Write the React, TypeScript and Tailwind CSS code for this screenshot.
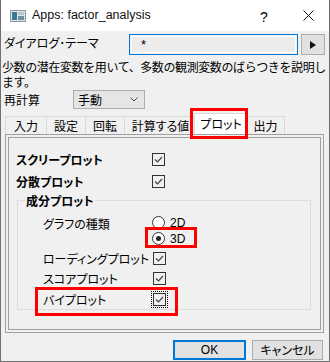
import React from "react";

const jp = "font-['Noto_Sans_CJK_JP','Noto_Sans',sans-serif]";
const palt = "[font-feature-settings:'palt']";

function Check({ focus = false }: { focus?: boolean }) {
  return (
    <div className={`w-[13px] h-[13px] border border-[#333] bg-[#f0f0f0] flex items-center justify-center ${focus ? "outline outline-1 outline-dotted outline-offset-1 outline-black" : ""}`}>
      <svg width="11" height="11" viewBox="0 0 11 11">
        <path d="M2 5.5 L4.5 8 L9 3" fill="none" stroke="#444" strokeWidth="1.2" />
      </svg>
    </div>
  );
}

function Radio({ on }: { on: boolean }) {
  return (
    <div className="w-[13px] h-[13px] rounded-full border border-[#333] bg-white flex items-center justify-center">
      {on && <div className="w-[5px] h-[5px] rounded-full bg-[#222]" />}
    </div>
  );
}

export default function App() {
  const tabs = [
    { label: "入力", w: "w-[41px]" },
    { label: "設定", w: "w-[39px]" },
    { label: "回転", w: "w-[39px]" },
    { label: "計算する値", w: "w-[72px]" },
  ];

  return (
    <div className={`w-[330px] h-[362px] bg-[#f0f0f0] text-[12px] text-black ${jp} border-x border-b border-[#707070] overflow-hidden relative`}>
      {/* title bar */}
      <div className="h-[31px] bg-white flex items-center relative">
        <svg className="ml-[9px]" width="16" height="12" viewBox="0 0 16 12">
          <rect x="0.5" y="0.5" width="15" height="11" fill="#dfe4e8" stroke="#8a96a0" />
          <rect x="2" y="2" width="5" height="8" fill="#3c7a8c" />
          <rect x="8" y="2" width="6" height="3" fill="#b8c4cc" />
          <rect x="8" y="6" width="6" height="4" fill="#6f8fa0" />
        </svg>
        <span className="ml-[6px] font-['Liberation_Sans',sans-serif] text-[12.5px] text-[#111]">Apps: factor_analysis</span>
        <span className="absolute left-[259px] top-[7px] font-['Liberation_Sans',sans-serif] text-[14px]">?</span>
        <svg className="absolute left-[302px] top-[10px]" width="11" height="11" viewBox="0 0 11 11">
          <path d="M0.5 0.5 L10.5 10.5 M10.5 0.5 L0.5 10.5" stroke="#111" strokeWidth="1" />
        </svg>
      </div>

      {/* theme row */}
      <div className="flex items-start h-[21px] mt-[3px]">
        <span className={`ml-[3px] w-[125px] leading-[15px] mt-[1px] ${palt}`}>ダイアログ･テーマ</span>
        <div className="w-[169px] h-[21px] border border-[#0078d7] p-[1px]">
          <div className="w-full h-full bg-[#ececec] border border-white flex items-center pl-[9px] font-['Liberation_Sans',sans-serif] text-[13px] leading-none">
            *
          </div>
        </div>
        <div className="ml-[3px] w-[24px] h-[21px] bg-[#e1e1e1] border border-[#adadad] flex items-center justify-center">
          <svg width="6" height="8" viewBox="0 0 6 8">
            <path d="M0 0 L6 4 L0 8 Z" fill="#111" />
          </svg>
        </div>
      </div>

      {/* description */}
      <div className="mt-[4px] ml-[1px] leading-[15px] tracking-[-0.4px] whitespace-nowrap">
        <p>少数の潜在変数を用いて、多数の観測変数のばらつきを説明し</p>
        <p>ます。</p>
      </div>

      {/* recalc row */}
      <div className="flex items-center mt-[1px] h-[19px]">
        <span className="ml-[3px] w-[69px]">再計算</span>
        <div className="w-[72px] h-[19px] bg-[#e5e5e5] border border-[#adadad] flex items-center justify-between pl-[4px] pr-[6px]">
          <span className="leading-none">手動</span>
          <svg width="8" height="5" viewBox="0 0 8 5">
            <path d="M0.5 0.5 L4 4 L7.5 0.5" fill="none" stroke="#444" strokeWidth="1" />
          </svg>
        </div>
      </div>

      {/* tabs */}
      <div className="flex items-end h-[21px] mt-[4px] ml-[4px]">
        {tabs.map((t) => (
          <div key={t.label} className={`${t.w} h-[18px] border-t border-l border-[#d9d9d9] bg-[#f0f0f0] flex items-center justify-center leading-none ${palt}`}>
            {t.label}
          </div>
        ))}
        <div className={`relative w-[54px] h-[21px] -ml-[2px] -mr-[2px] bg-white border border-b-0 border-[#d9d9d9] flex items-center justify-center leading-none z-10 ${palt}`}>
          プロット
          <div className="absolute -left-[5px] -right-[1px] -top-[6px] -bottom-[5px] border-[3px] border-[#ff0000]" />
        </div>
        <div className="w-[39px] h-[18px] border-t border-x border-[#d9d9d9] flex items-center justify-center leading-none">
          出力
        </div>
      </div>

      {/* panel */}
      <div className="ml-[4px] mr-[5px] h-[199px] border border-[#a0a0a0] bg-[#f0f0f0] p-[2px]">
        <div className={`h-full border border-[#a0a0a0] relative ${palt}`}>
          <div className="flex items-center h-[13px] mt-[15px]">
            <span className="ml-[7px] w-[136px] font-bold leading-none">スクリープロット</span>
            <Check />
          </div>
          <div className="flex items-center h-[13px] mt-[9px]">
            <span className="ml-[7px] w-[136px] font-bold leading-none">分散プロット</span>
            <Check />
          </div>

          {/* group box */}
          <div className="relative ml-[8px] mr-[9px] mt-[12px] h-[110px] border border-[#dcdcdc]">
            <span className="absolute left-[7px] -top-[8px] px-[1px] bg-[#f0f0f0] font-bold leading-[15px]">成分プロット</span>
            <div className="flex items-start mt-[15px]">
              <span className="ml-[25px] w-[109px] leading-[13px] mt-[1px]">グラフの種類</span>
              <div className="flex flex-col gap-[3px]">
                <div className="flex items-center gap-[5px] h-[13px]">
                  <Radio on={false} />
                  <span className="font-['Liberation_Sans',sans-serif] text-[12px] leading-none">2D</span>
                </div>
                <div className="relative flex items-center gap-[5px] h-[13px]">
                  <Radio on />
                  <span className="font-['Liberation_Sans',sans-serif] text-[12px] leading-none">3D</span>
                  <div className="absolute -left-[7px] -top-[5px] w-[52px] h-[21px] border-[3px] border-[#ff0000]" />
                </div>
              </div>
            </div>
            <div className="flex items-center h-[13px] mt-[7px]">
              <span className="ml-[25px] w-[110px] leading-none whitespace-nowrap">ローディングプロット</span>
              <Check />
            </div>
            <div className="flex items-center h-[13px] mt-[7px]">
              <span className="ml-[25px] w-[110px] leading-none">スコアプロット</span>
              <Check />
            </div>
            <div className="relative flex items-center h-[13px] mt-[8px]">
              <span className="ml-[25px] w-[110px] leading-none">バイプロット</span>
              <Check focus />
              <div className="absolute left-[17px] -top-[6px] w-[143px] h-[29px] border-[3px] border-[#ff0000]" />
            </div>
          </div>
        </div>
      </div>

      {/* buttons */}
      <div className="flex justify-end gap-[6px] mt-[7px] mr-[6px]">
        <div className="w-[73px] h-[20px] bg-[#e1e1e1] border-2 border-[#0078d7] flex items-center justify-center font-['Liberation_Sans',sans-serif] text-[12px] leading-none">
          OK
        </div>
        <div className={`w-[71px] h-[20px] bg-[#e1e1e1] border border-[#adadad] flex items-center justify-center leading-none ${palt}`}>
          キャンセル
        </div>
      </div>
    </div>
  );
}
